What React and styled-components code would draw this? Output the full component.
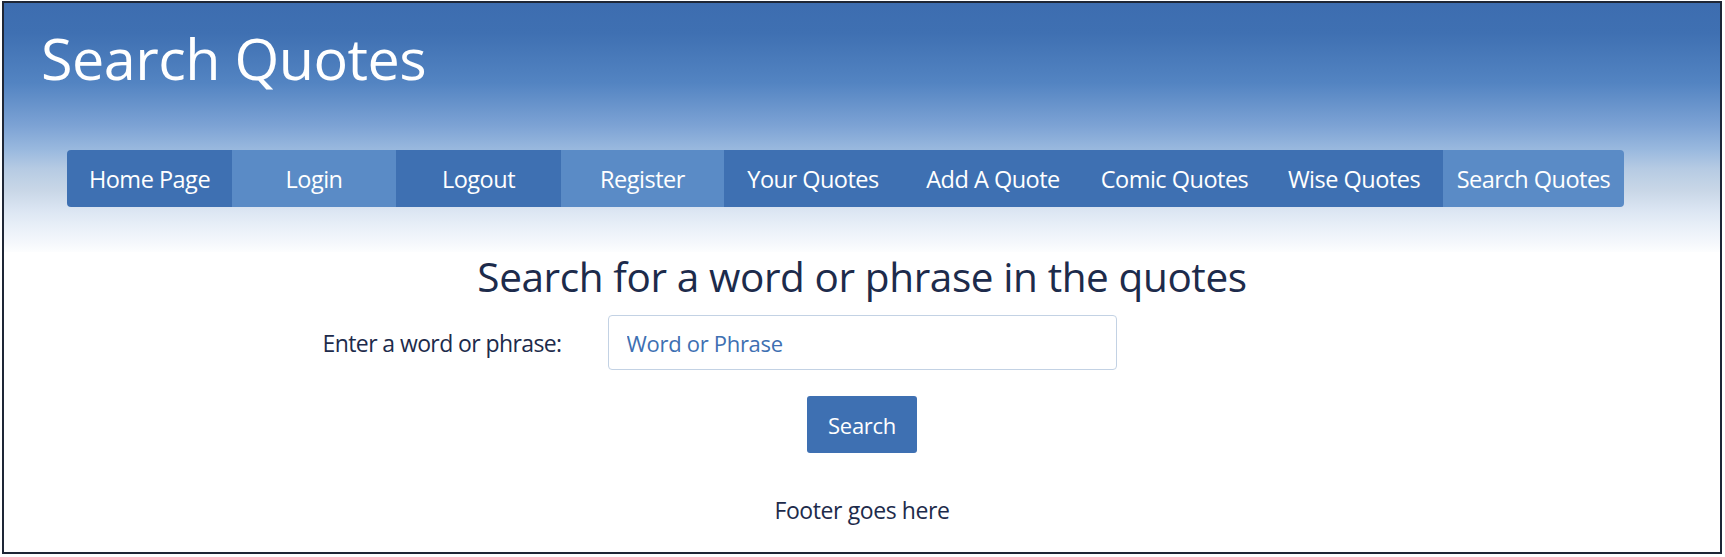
import React from "react";
import styled, { createGlobalStyle } from "styled-components";

const GlobalStyle = createGlobalStyle`
  html, body {
    margin: 0;
    padding: 0;
    background: #fff;
  }
  body {
    font-family: "Open Sans", "Noto Sans", sans-serif;
  }
`;

const navItems = [
  { title: "Home Page", width: 165 },
  { title: "Login", width: 164, light: true },
  { title: "Logout", width: 165 },
  { title: "Register", width: 163, light: true },
  { title: "Your Quotes", width: 178 },
  { title: "Add A Quote", width: 182 },
  { title: "Comic Quotes", width: 181 },
  { title: "Wise Quotes", width: 178 },
  { title: "Search Quotes", width: 181, light: true },
];

export default () => {
  return (
    <>
      <GlobalStyle />
      <Frame>
        <Header>
          <Title>Search Quotes</Title>
          <Nav>
            {navItems.map((it, i) => (
              <Item key={i} light={it.light} width={it.width}>
                {it.title}
              </Item>
            ))}
          </Nav>
        </Header>
        <Main>
          <Heading>Search for a word or phrase in the quotes</Heading>
          <FormRow>
            <Label htmlFor="search">Enter a word or phrase:</Label>
            <Input id="search" type="text" placeholder="Word or Phrase" />
          </FormRow>
          <Button type="button">Search</Button>
          <Footer>Footer goes here</Footer>
        </Main>
      </Frame>
    </>
  );
};

const Frame = styled.div`
  box-sizing: border-box;
  margin: 1px 3px 0 2px;
  height: 553px;
  border: 2px solid #1e2636;
  box-shadow: 0 1px 0 #8fb1dc;
  overflow: hidden;
  background: #fff;
`;

const Header = styled.header`
  padding: 0 0 45px 63px;
  background: linear-gradient(
    to bottom,
    #3d6db0 0px,
    #3f70b2 30px,
    #5384c2 80px,
    #7ca2d4 122px,
    #9bbadf 148px,
    #b6cbe3 166px,
    #c9d7e7 188px,
    #dce6f3 208px,
    #e9f0f8 224px,
    #f5f8fc 240px,
    #ffffff 252px
  );
`;

const Title = styled.h1`
  margin: 0 0 0 -26px;
  padding-top: 17px;
  height: 147px;
  box-sizing: border-box;
  color: #fff;
  font-size: 57.5px;
  font-weight: 400;
  line-height: 76px;
  letter-spacing: -0.5px;
`;

const Nav = styled.nav`
  display: flex;
  height: 57px;
  width: max-content;
  border-radius: 4px;
  overflow: hidden;
`;

const Item = styled.a`
  display: flex;
  align-items: center;
  justify-content: center;
  width: ${(props) => props.width}px;
  background-color: ${(props) => (props.light ? "#5a8bc6" : "#3e70b2")};
  color: #fff;
  font-size: 23.5px;
  letter-spacing: -0.5px;
  cursor: pointer;
  text-decoration: none;
`;

const Main = styled.main`
  display: flex;
  flex-direction: column;
  align-items: center;
  color: #1d2b4b;
`;

const Heading = styled.h2`
  margin: 0;
  height: 63px;
  font-size: 40.5px;
  font-weight: 400;
  line-height: 50px;
  letter-spacing: -0.4px;
`;

const FormRow = styled.div`
  display: grid;
  grid-template-columns: 1fr 509px 1fr;
  align-items: center;
  width: 100%;
`;

const Label = styled.label`
  justify-self: end;
  margin-right: 46px;
  font-size: 23px;
  letter-spacing: -0.6px;
`;

const Input = styled.input`
  box-sizing: border-box;
  height: 55px;
  padding: 0 18px;
  border: 1.5px solid #c3d2e4;
  border-radius: 4px;
  font-family: "Open Sans", "Noto Sans", sans-serif;
  font-size: 22px;
  letter-spacing: -0.3px;
  color: #3e70b2;
  outline: none;
  &::placeholder {
    color: #3e70b2;
    opacity: 1;
  }
`;

const Button = styled.button`
  margin-top: 26px;
  width: 110px;
  height: 57px;
  border: none;
  border-radius: 3px;
  background-color: #3e70b2;
  color: #fff;
  font-family: "Open Sans", "Noto Sans", sans-serif;
  font-size: 22px;
  letter-spacing: -0.3px;
  cursor: pointer;
`;

const Footer = styled.footer`
  margin-top: 41px;
  font-size: 23px;
  letter-spacing: -0.4px;
`;
